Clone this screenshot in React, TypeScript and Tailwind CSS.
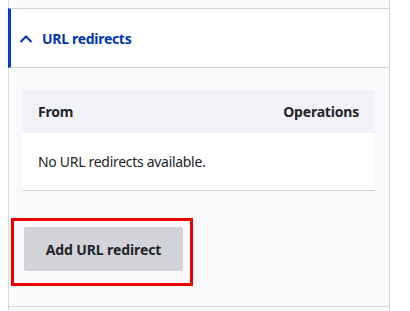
export default function App() {
  return (
    <div className="relative w-[410px] h-[311px] overflow-hidden bg-white font-['Noto_Sans',sans-serif] text-[#232429]">
      <div className="ml-2 w-[382px] h-full bg-[#f9fafc] border-x border-[#d9dadf] flex flex-col">
        <div className="h-2 shrink-0" />
        <div className="-ml-px h-[60px] shrink-0 bg-white border-y border-[#d4d5da] border-l-[3px] border-l-[#003ecc] flex items-center pl-[8px]">
          <svg width="14" height="10" viewBox="0 0 14 10" className="mr-[9px] mt-[1px]">
            <path d="M1.5 8 L7 2.5 L12.5 8" fill="none" stroke="#0036b1" strokeWidth="2" />
          </svg>
          <span className="text-[14px] font-bold tracking-[-0.3px] text-[#0036b1]">URL redirects</span>
        </div>
        <div className="px-[14px] pt-[22px] pb-[35px] border-b border-[#d9dadf] shrink-0">
          <div className="w-[352px] border-b border-[#d4d5da]">
            <div className="h-[43px] bg-[#f2f3f8] flex items-center justify-between pl-[15px] pr-[16px] text-[14px] font-bold tracking-[-0.2px]">
              <span>From</span>
              <span>Operations</span>
            </div>
            <div className="h-[57px] bg-white flex items-center pl-[15px] text-[14px] tracking-[-0.3px]">
              No URL redirects available.
            </div>
          </div>
          <button className="mt-[36px] ml-px w-[159px] h-[44px] rounded-[2px] bg-[#d3d4d9] text-[14px] font-bold tracking-[-0.1px] text-[#232429]">
            Add URL redirect
          </button>
        </div>
      </div>
      <div className="absolute left-[11px] top-[218px] w-[182px] h-[68px] border-[3px] border-[#ee0000] pointer-events-none" />
    </div>
  );
}
